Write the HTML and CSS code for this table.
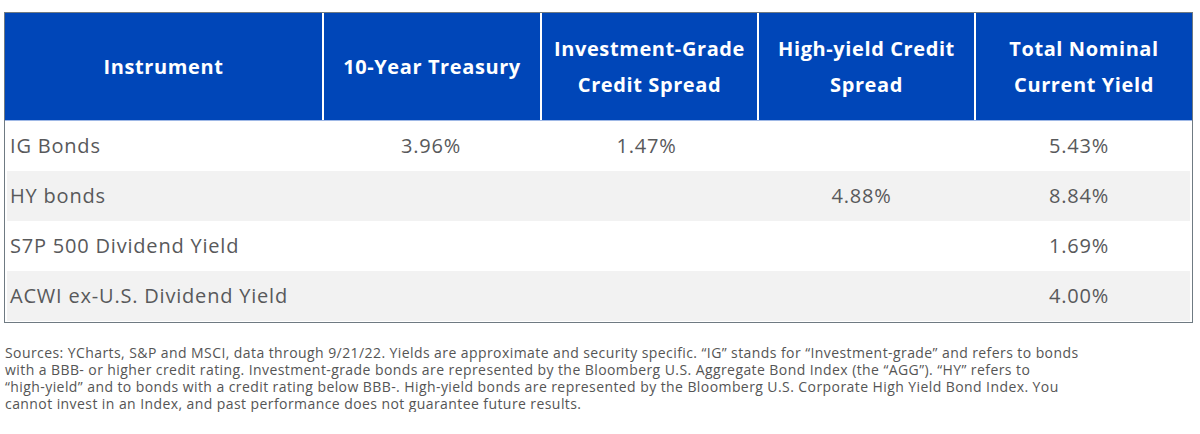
FILE: index.html
```html
<!DOCTYPE html>
<html>
<head>
<meta charset="utf-8">
<link rel="stylesheet" href="styles.css">
</head>
<body>
<div class="page">
  <div class="table">
    <div class="row head">
      <div class="th">Instrument</div>
      <div class="th">10-Year Treasury</div>
      <div class="th">Investment-Grade<br>Credit Spread</div>
      <div class="th">High-yield Credit<br>Spread</div>
      <div class="th">Total Nominal<br>Current Yield</div>
    </div>
    <div class="body">
      <div class="row tr">
        <div class="td name">IG Bonds</div>
        <div class="td">3.96%</div>
        <div class="td">1.47%</div>
        <div class="td"></div>
        <div class="td">5.43%</div>
      </div>
      <div class="row tr alt">
        <div class="td name">HY bonds</div>
        <div class="td"></div>
        <div class="td"></div>
        <div class="td">4.88%</div>
        <div class="td">8.84%</div>
      </div>
      <div class="row tr">
        <div class="td name">S7P 500 Dividend Yield</div>
        <div class="td"></div>
        <div class="td"></div>
        <div class="td"></div>
        <div class="td">1.69%</div>
      </div>
      <div class="row tr alt">
        <div class="td name">ACWI ex-U.S. Dividend Yield</div>
        <div class="td"></div>
        <div class="td"></div>
        <div class="td"></div>
        <div class="td">4.00%</div>
      </div>
    </div>
  </div>
  <p class="note">Sources: YCharts, S&amp;P and MSCI, data through 9/21/22. Yields are approximate and security specific. “IG” stands for “Investment-grade” and refers to bonds with a BBB- or higher credit rating. Investment-grade bonds are represented by the Bloomberg U.S. Aggregate Bond Index (the “AGG”). “HY” refers to <span class="nw">“high-yield”</span> and to bonds with a credit rating below BBB-. High-yield bonds are represented by the Bloomberg U.S. Corporate High Yield Bond Index. You cannot invest in an Index, and past performance does not guarantee future results.</p>
</div>
</body>
</html>
```
FILE: styles.css
```css
html, body {
  margin: 0;
  padding: 0;
  background: #ffffff;
}
.page {
  padding: 12px 6px 0 4px;
  font-family: "Open Sans", Lato, sans-serif;
}
.table {
  border: 1.5px solid #6f7a82;
  width: 1187px;
}
.row {
  display: grid;
  grid-template-columns: 317px 216px 215px 215px 1fr;
}
.head {
  column-gap: 2px;
  background: #ffffff;
  border-bottom: 1px solid #9fb8e6;
}
.th {
  background: #0046b8;
  color: #ffffff;
  font-weight: 700;
  font-size: 20px;
  line-height: 36px;
  height: 107px;
  display: flex;
  align-items: center;
  justify-content: center;
  text-align: center;
  letter-spacing: 0.6px;
}
.body {
  padding: 0 2px 1px 2px;
}
.tr {
  height: 50px;
  background: #ffffff;
}
.tr.alt {
  background: #f2f2f2;
}
.td {
  font-size: 20px;
  line-height: 50px;
  color: #58595b;
  text-align: center;
  padding-right: 2px;
  letter-spacing: 0.8px;
}
.td.name {
  text-align: left;
  padding-left: 3px;
}
.note {
  margin: 21px 0 0 1px;
  font-size: 14px;
  line-height: 17px;
  color: #555555;
  width: 1100px;
  letter-spacing: 0.42px;
}
.nw {
  white-space: nowrap;
}
```
